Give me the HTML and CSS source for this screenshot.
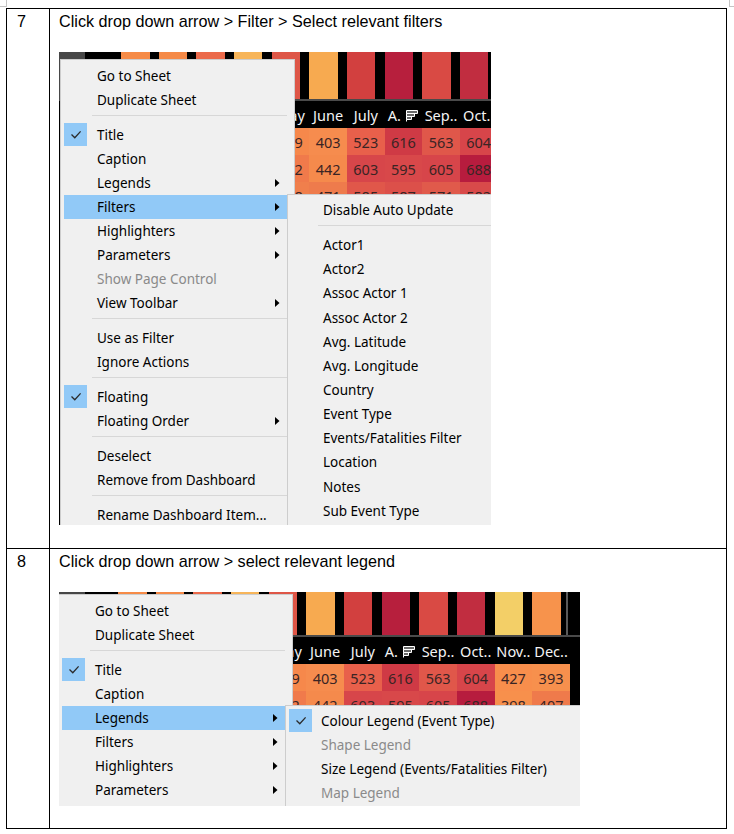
FILE: index.html
```html
<!DOCTYPE html>
<html lang="en">
<head>
<meta charset="utf-8">
<title>Steps</title>
<link rel="stylesheet" href="styles.css">
</head>
<body>
<div class="marks"><span class="mark mark-left"></span><span class="mark mark-right"></span></div>
<div class="steps">
  <div class="num">7</div>
  <div class="body body-a">
    <p class="instr">Click drop down arrow &gt; Filter &gt; Select relevant filters</p>
    <div class="shot shot-a">
      <div class="dash">
        <div class="bars">
          <div class="lead"><span class="lead-gray"></span></div>
          <div class="col"><span class="bar" style="background:#f68b47"></span></div>
          <div class="col"><span class="bar" style="background:#f58a48"></span></div>
          <div class="col"><span class="bar" style="background:#eb6a4b"></span></div>
          <div class="col"><span class="bar" style="background:#f7b55a"></span></div>
          <div class="col"><span class="bar" style="background:#de5647"></span></div>
          <div class="col"><span class="bar" style="background:#f7aa50"></span></div>
          <div class="col"><span class="bar" style="background:#d2403f"></span></div>
          <div class="col"><span class="bar" style="background:#b71f3d"></span></div>
          <div class="col"><span class="bar" style="background:#d94a44"></span></div>
          <div class="col"><span class="bar" style="background:#c12d40"></span></div>
          <div class="col"><span class="bar" style="background:#f3cf67"></span></div>
          <div class="col col-last"><span class="bar" style="background:#f7934c"></span></div>
          <div class="pane-edge"></div>
        </div>
        <div class="rule"></div>
        <div class="hdr">
          <div class="lead"></div>
          <div class="col">Jan..</div><div class="col">Feb..</div><div class="col">Mar..</div><div class="col">Apr..</div>
          <div class="col">May</div><div class="col">June</div><div class="col">July</div>
          <div class="col">A.<svg class="sort" width="14" height="13" viewBox="0 0 14 13"><path d="M1.5 1.5h11v3h-11z M1.5 4.5h8v3h-8z M1.5 7.5h5v3h-5z" fill="#6a6a6a" stroke="#fff"/><path d="M1.5 10.5v2" stroke="#fff"/></svg></div>
          <div class="col">Sep..</div><div class="col">Oct..</div><div class="col">Nov..</div><div class="col">Dec..</div>
        </div>
        <div class="row">
          <div class="lead"></div>
          <div class="col" style="background:#f68b4c">382</div><div class="col" style="background:#f79a4e">351</div><div class="col" style="background:#f08250">410</div><div class="col" style="background:#f7a04f">366</div>
          <div class="col" style="background:#f6884b">389</div><div class="col" style="background:#f68c4e">403</div><div class="col" style="background:#e8604b">523</div><div class="col" style="background:#cf3a45">616</div>
          <div class="col" style="background:#e0574a">563</div><div class="col" style="background:#d7454a">604</div><div class="col" style="background:#f88e4c">427</div><div class="col" style="background:#f7904d">393</div>
        </div>
        <div class="row">
          <div class="lead"></div>
          <div class="col" style="background:#f58a4c">398</div><div class="col" style="background:#f7974e">362</div><div class="col" style="background:#f07f4f">421</div><div class="col" style="background:#f69a4e">377</div>
          <div class="col" style="background:#f07a4b">412</div><div class="col" style="background:#f58a4c">442</div><div class="col" style="background:#d7464a">603</div><div class="col" style="background:#d8484a">595</div>
          <div class="col" style="background:#d7454a">605</div><div class="col" style="background:#b71c3e">688</div><div class="col" style="background:#f7904c">398</div><div class="col" style="background:#ef7a4b">407</div>
        </div>
        <div class="row">
          <div class="lead"></div>
          <div class="col" style="background:#f58a4c">376</div><div class="col" style="background:#f7974e">359</div><div class="col" style="background:#f07f4f">418</div><div class="col" style="background:#f69a4e">371</div>
          <div class="col" style="background:#f07f4c">438</div><div class="col" style="background:#ee7b4c">471</div><div class="col" style="background:#e0574a">585</div><div class="col" style="background:#dc504a">587</div>
          <div class="col" style="background:#e05a4b">571</div><div class="col" style="background:#d84a4a">582</div><div class="col" style="background:#f58a4c">431</div><div class="col" style="background:#f28450">418</div>
        </div>
      </div>

      <div class="menu menu-a">
        <div class="item">Go to Sheet</div>
        <div class="item">Duplicate Sheet</div>
        <div class="sep"></div>
        <div class="item"><span class="check"><svg width="23" height="23" viewBox="0 0 23 23"><path d="M7.5 11.5l3.3 3.3 5.8-6.4" fill="none" stroke="#2b2b2b" stroke-width="1.3"/></svg></span>Title</div>
        <div class="item">Caption</div>
        <div class="item">Legends<svg class="arrow" width="5" height="8" viewBox="0 0 5 8"><path d="M0 0L4.5 4L0 8z" fill="#000"/></svg></div>
        <div class="item active">Filters<svg class="arrow" width="5" height="8" viewBox="0 0 5 8"><path d="M0 0L4.5 4L0 8z" fill="#000"/></svg>
          <div class="submenu sub-a">
            <div class="item">Disable Auto Update</div>
            <div class="sep"></div>
            <div class="item">Actor1</div>
            <div class="item">Actor2</div>
            <div class="item">Assoc Actor 1</div>
            <div class="item">Assoc Actor 2</div>
            <div class="item">Avg. Latitude</div>
            <div class="item">Avg. Longitude</div>
            <div class="item">Country</div>
            <div class="item">Event Type</div>
            <div class="item">Events/Fatalities Filter</div>
            <div class="item">Location</div>
            <div class="item">Notes</div>
            <div class="item">Sub Event Type</div>
          </div>
        </div>
        <div class="item">Highlighters<svg class="arrow" width="5" height="8" viewBox="0 0 5 8"><path d="M0 0L4.5 4L0 8z" fill="#000"/></svg></div>
        <div class="item">Parameters<svg class="arrow" width="5" height="8" viewBox="0 0 5 8"><path d="M0 0L4.5 4L0 8z" fill="#000"/></svg></div>
        <div class="item disabled">Show Page Control</div>
        <div class="item">View Toolbar<svg class="arrow" width="5" height="8" viewBox="0 0 5 8"><path d="M0 0L4.5 4L0 8z" fill="#000"/></svg></div>
        <div class="sep"></div>
        <div class="item">Use as Filter</div>
        <div class="item">Ignore Actions</div>
        <div class="sep"></div>
        <div class="item"><span class="check"><svg width="23" height="23" viewBox="0 0 23 23"><path d="M7.5 11.5l3.3 3.3 5.8-6.4" fill="none" stroke="#2b2b2b" stroke-width="1.3"/></svg></span>Floating</div>
        <div class="item">Floating Order<svg class="arrow" width="5" height="8" viewBox="0 0 5 8"><path d="M0 0L4.5 4L0 8z" fill="#000"/></svg></div>
        <div class="sep"></div>
        <div class="item">Deselect</div>
        <div class="item">Remove from Dashboard</div>
        <div class="sep"></div>
        <div class="item">Rename Dashboard Item...</div>
      </div>
    </div>
  </div>

  <div class="num">8</div>
  <div class="body body-b">
    <p class="instr">Click drop down arrow &gt; select relevant legend</p>
    <div class="shot shot-b">
      <div class="dash">
        <div class="bars">
          <div class="lead"><span class="lead-gray"></span></div>
          <div class="col"><span class="bar" style="background:#f68b47"></span></div>
          <div class="col"><span class="bar" style="background:#f58a48"></span></div>
          <div class="col"><span class="bar" style="background:#eb6a4b"></span></div>
          <div class="col"><span class="bar" style="background:#f7b55a"></span></div>
          <div class="col"><span class="bar" style="background:#de5647"></span></div>
          <div class="col"><span class="bar" style="background:#f7aa50"></span></div>
          <div class="col"><span class="bar" style="background:#d2403f"></span></div>
          <div class="col"><span class="bar" style="background:#b71f3d"></span></div>
          <div class="col"><span class="bar" style="background:#d94a44"></span></div>
          <div class="col"><span class="bar" style="background:#c12d40"></span></div>
          <div class="col"><span class="bar" style="background:#f3cf67"></span></div>
          <div class="col col-last"><span class="bar" style="background:#f7934c"></span></div>
          <div class="pane-edge"></div>
        </div>
        <div class="rule"></div>
        <div class="hdr">
          <div class="lead"></div>
          <div class="col">Jan..</div><div class="col">Feb..</div><div class="col">Mar..</div><div class="col">Apr..</div>
          <div class="col">May</div><div class="col">June</div><div class="col">July</div>
          <div class="col">A.<svg class="sort" width="14" height="13" viewBox="0 0 14 13"><path d="M1.5 1.5h11v3h-11z M1.5 4.5h8v3h-8z M1.5 7.5h5v3h-5z" fill="#6a6a6a" stroke="#fff"/><path d="M1.5 10.5v2" stroke="#fff"/></svg></div>
          <div class="col">Sep..</div><div class="col">Oct..</div><div class="col">Nov..</div><div class="col">Dec..</div>
        </div>
        <div class="row">
          <div class="lead"></div>
          <div class="col" style="background:#f68b4c">382</div><div class="col" style="background:#f79a4e">351</div><div class="col" style="background:#f08250">410</div><div class="col" style="background:#f7a04f">366</div>
          <div class="col" style="background:#f6884b">389</div><div class="col" style="background:#f68c4e">403</div><div class="col" style="background:#e8604b">523</div><div class="col" style="background:#cf3a45">616</div>
          <div class="col" style="background:#e0574a">563</div><div class="col" style="background:#d7454a">604</div><div class="col" style="background:#f88e4c">427</div><div class="col" style="background:#f7904d">393</div>
        </div>
        <div class="row">
          <div class="lead"></div>
          <div class="col" style="background:#f58a4c">398</div><div class="col" style="background:#f7974e">362</div><div class="col" style="background:#f07f4f">421</div><div class="col" style="background:#f69a4e">377</div>
          <div class="col" style="background:#f07a4b">412</div><div class="col" style="background:#f58a4c">442</div><div class="col" style="background:#d7464a">603</div><div class="col" style="background:#d8484a">595</div>
          <div class="col" style="background:#d7454a">605</div><div class="col" style="background:#b71c3e">688</div><div class="col" style="background:#f7904c">398</div><div class="col" style="background:#ef7a4b">407</div>
        </div>
      </div>

      <div class="menu menu-b">
        <div class="item">Go to Sheet</div>
        <div class="item">Duplicate Sheet</div>
        <div class="sep"></div>
        <div class="item"><span class="check"><svg width="23" height="23" viewBox="0 0 23 23"><path d="M7.5 11.5l3.3 3.3 5.8-6.4" fill="none" stroke="#2b2b2b" stroke-width="1.3"/></svg></span>Title</div>
        <div class="item">Caption</div>
        <div class="item active">Legends<svg class="arrow" width="5" height="8" viewBox="0 0 5 8"><path d="M0 0L4.5 4L0 8z" fill="#000"/></svg>
          <div class="submenu sub-b">
            <div class="item"><span class="check"><svg width="23" height="23" viewBox="0 0 23 23"><path d="M7.5 11.5l3.3 3.3 5.8-6.4" fill="none" stroke="#2b2b2b" stroke-width="1.3"/></svg></span>Colour Legend (Event Type)</div>
            <div class="item disabled">Shape Legend</div>
            <div class="item">Size Legend (Events/Fatalities Filter)</div>
            <div class="item disabled">Map Legend</div>
          </div>
        </div>
        <div class="item">Filters<svg class="arrow" width="5" height="8" viewBox="0 0 5 8"><path d="M0 0L4.5 4L0 8z" fill="#000"/></svg></div>
        <div class="item">Highlighters<svg class="arrow" width="5" height="8" viewBox="0 0 5 8"><path d="M0 0L4.5 4L0 8z" fill="#000"/></svg></div>
        <div class="item">Parameters<svg class="arrow" width="5" height="8" viewBox="0 0 5 8"><path d="M0 0L4.5 4L0 8z" fill="#000"/></svg></div>
        <div class="item disabled">Show Page Control</div>
      </div>
    </div>
  </div>
</div>
</body>
</html>
```

FILE: styles.css
```css
* { box-sizing: border-box; }
html, body { margin: 0; padding: 0; background: #fff; }
body {
  width: 734px;
  height: 834px;
  overflow: hidden;
  font-family: "Liberation Sans", Arial, sans-serif;
  color: #000;
}

.marks { display: flex; justify-content: space-between; height: 8px; }
.mark { display: block; height: 7px; border-bottom: 1px solid #c4c4c4; }
.mark-left { width: 7px; border-right: 1px solid #c4c4c4; }
.mark-right { width: 5px; border-left: 1px solid #c4c4c4; }

.steps {
  display: grid;
  grid-template-columns: 43px 677px;
  margin-left: 6px;
  width: 721px;
  border-left: 1px solid #000;
  border-top: 1px solid #000;
}
.num, .body {
  border-right: 1px solid #000;
  border-bottom: 1px solid #000;
  padding-top: 2px;
  font-size: 16.2px;
  line-height: 20px;
}
.num { padding-left: 10px; }
.body { padding-left: 9px; }
.body-a { padding-bottom: 23px; }
.body-b { padding-bottom: 22px; }
.instr { margin: 0; white-space: nowrap; }

.shot { position: relative; overflow: hidden; margin-top: 21px; background: #000; }
.shot-a { width: 432px; height: 473px; }
.shot-b { width: 521px; height: 214px; }

/* dashboard underneath */
.dash { display: flex; flex-direction: column; font-family: "Noto Sans", "Open Sans", sans-serif; }
.bars, .hdr, .row { display: flex; flex: none; }
.bars { background: #000; }
.shot-a .bars { height: 47px; }
.shot-b .bars { height: 43px; }
.lead { flex: none; display: flex; background: #000; }
.shot-a .lead { width: 62px; }
.shot-b .lead { width: 59px; }
.lead-gray { width: 26px; background: #474747; }
.col { flex: none; width: 37.67px; }
.bars .col-last { width: 33.67px; }
.pane-edge { flex: none; width: 2px; background: #5a5a5a; }
.bar { display: block; width: 28.5px; height: 100%; }
.rule { height: 2px; background: #4a4a4a; }
.hdr {
  height: 27px;
  padding-top: 2px;
  background: #000;
  color: #f4f4f4;
  font-size: 14.5px;
  line-height: 25px;
}
.hdr .col { text-align: center; white-space: nowrap; }
.sort { vertical-align: -1px; margin-left: 4px; }
.row { height: 27px; }
.row .col {
  padding-top: 2px;
  text-align: center;
  font-size: 14.5px;
  line-height: 25px;
  color: #3a2424;
}

/* context menus */
.menu {
  position: absolute;
  width: 235px;
  background: #f0f0f0;
  border: 1px solid #cdcdcd;
  padding: 4px 0 8px;
  font-family: "Noto Sans", "Open Sans", sans-serif;
  font-size: 13.5px;
  color: #000;
}
.menu-a { left: 1px; top: 7px; }
.menu-b { left: -1px; top: 2px; }
.item {
  position: relative;
  height: 24px;
  line-height: 24px;
  margin-left: 3px;
  width: 223px;
  padding-left: 33px;
  white-space: nowrap;
}
.item.active { background: #91c9f7; }
.item.disabled { color: #8a8a8a; }
.check {
  position: absolute;
  left: 0;
  top: 0;
  width: 23px;
  height: 23px;
  background: #91c9f7;
}
.check svg { display: block; }
.arrow { position: absolute; left: 211px; top: 8px; display: block; }
.sep {
  height: 1px;
  background: #d7d7d7;
  margin: 3px 0 7px 31px;
  width: 195px;
}
.submenu {
  position: absolute;
  left: 223px;
  top: -1px;
  background: #f0f0f0;
  border: 1px solid #cdcdcd;
  padding: 3px 0 8px;
  color: #000;
}
.sub-a { width: 215px; }
.sub-b { width: 300px; }
.submenu .item { width: auto; margin-right: 3px; padding-left: 32px; }
.sub-a .item { height: 24.15px; }
.submenu .sep { width: auto; margin: 3px 0 7px 30px; }
```
